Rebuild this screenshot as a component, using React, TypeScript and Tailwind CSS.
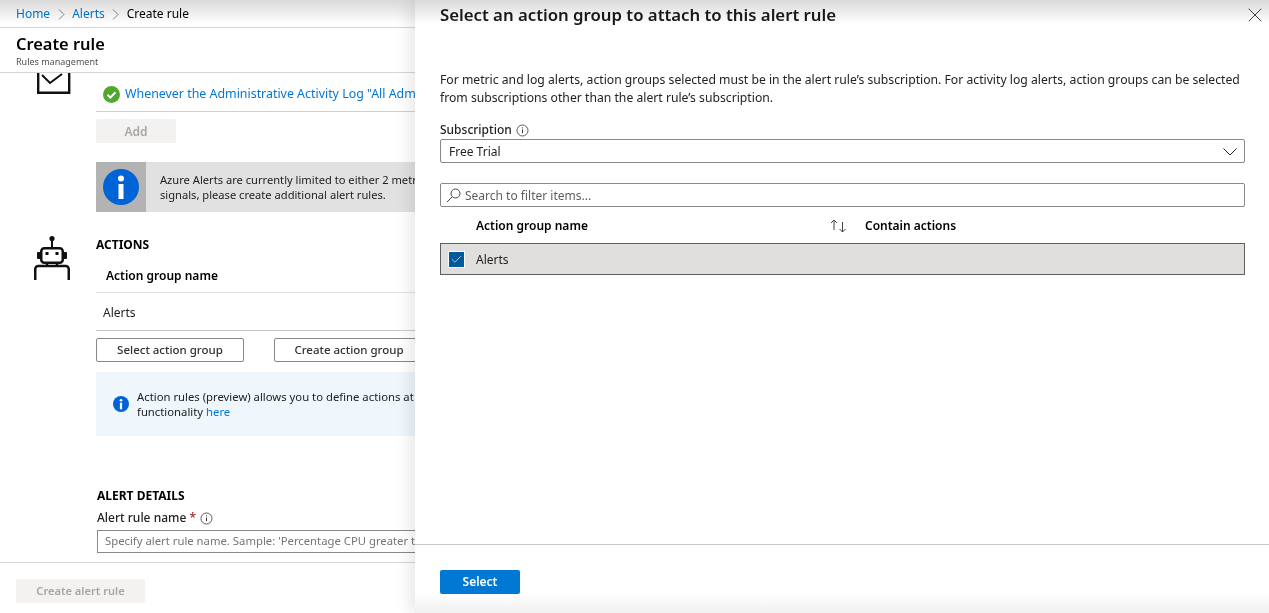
import React from 'react';
import { X, Check } from 'lucide-react';

const FONT = "font-['Noto_Sans',sans-serif]";

const InfoHint = () => (
  <svg width="13" height="13" viewBox="0 0 13 13" className="shrink-0" fill="none" stroke="#323130">
    <circle cx="6.5" cy="6.5" r="5.5" strokeWidth="0.8" />
    <path d="M6.5 5.6v3.6" strokeWidth="1" />
    <path d="M6.5 3.4v1" strokeWidth="1" />
  </svg>
);

const BlueInfo = ({ size }: { size: number }) => (
  <svg width={size} height={size} viewBox="0 0 36 36" className="shrink-0">
    <circle cx="18" cy="18" r="18" fill="#0063d6" />
    <circle cx="18" cy="9.5" r="3" fill="#fff" />
    <rect x="15.5" y="15" width="5" height="15" fill="#fff" />
  </svg>
);

const SuccessCheck = () => (
  <svg width="17" height="17" viewBox="0 0 17 17" className="shrink-0">
    <circle cx="8.5" cy="8.5" r="8.5" fill="#52a82e" />
    <path d="M4.5 8.8l2.8 2.8 5.2-5.4" fill="none" stroke="#fff" strokeWidth="2" />
  </svg>
);

const RobotIcon = () => (
  <svg width="38" height="44" viewBox="0 0 38 44" className="shrink-0" fill="none" stroke="#111" strokeWidth="2.5">
    <circle cx="19" cy="2.6" r="2.6" fill="#111" stroke="none" />
    <path d="M19 4v8" strokeWidth="2" />
    <rect x="8.25" y="12.25" width="21.5" height="14.5" rx="3" />
    <rect x="4" y="16" width="3.5" height="7" rx="1" fill="#111" stroke="none" />
    <rect x="30.5" y="16" width="3.5" height="7" rx="1" fill="#111" stroke="none" />
    <rect x="12.5" y="16" width="3" height="3" fill="#111" stroke="none" />
    <rect x="22.5" y="16" width="3" height="3" fill="#111" stroke="none" />
    <path d="M14 27v3M24 27v3" />
    <path d="M2.25 44V33a3 3 0 0 1 3-3h27.5a3 3 0 0 1 3 3v11" />
  </svg>
);

const Crumb = () => (
  <svg width="7" height="11" viewBox="0 0 7 11" className="mx-[7.5px]" fill="none" stroke="#8a8886">
    <path d="M1 .5l5 5-5 5" />
  </svg>
);

const LeftBlade = () => (
  <div className="w-[415px] shrink-0 h-full flex flex-col overflow-hidden">
    {/* Breadcrumb */}
    <div className="h-[28px] shrink-0 border-b border-[#d6d6d6] flex items-center pl-[16px] text-[12px] text-[#323130] pt-[1px]">
      <span className="text-[#0078d4]">Home</span>
      <Crumb />
      <span className="text-[#0078d4]">Alerts</span>
      <Crumb />
      <span className="text-black">Create rule</span>
    </div>

    {/* Title */}
    <div className="h-[45px] shrink-0 border-b border-[#d6d6d6] pl-[16px] pt-[5px]">
      <div className="text-[16.4px] leading-[22px] font-semibold text-black">Create rule</div>
      <div className="mt-[1px] text-[9px] leading-[12px] text-[#505050]">Rules management</div>
    </div>

    {/* Scrolling body */}
    <div className="flex-1 min-h-0 overflow-hidden flex flex-col">
      <div className="flex">
        <div className="w-[96px] shrink-0 pl-[37px]">
          <svg width="34" height="21" viewBox="0 0 34 21" fill="none" stroke="#111" strokeWidth="2.4">
            <path d="M1.2 0v19.8h31V0" />
            <path d="M5 2l8 8L25 1" strokeWidth="2" />
          </svg>
        </div>
        <div className="flex-1 min-w-0">
          <div className="h-[39px] border-b border-[#d0d0d0] flex items-center pl-[7px] pt-[4px] gap-[5px] whitespace-nowrap text-[12.4px] text-[#0078d4]">
            <SuccessCheck />
            <span>Whenever the Administrative Activity Log "All Administrative operations"</span>
          </div>
          <div className="mt-[7px] w-[80px] h-[24px] pt-[1px] bg-[#f3f2f1] rounded-[2px] flex items-center justify-center text-[12px] font-semibold text-[#a8a6a4]">Add</div>
          <div className="mt-[19px] h-[50px] bg-[#e1e1e1] flex items-center whitespace-nowrap">
            <div className="w-[50px] shrink-0 h-full bg-[#b3b3b3] flex items-center justify-center"><BlueInfo size={36} /></div>
            <div className="pl-[14px] text-[11.15px] leading-[15px] text-[#222]">
              <div>Azure Alerts are currently limited to either 2 metrics or 1 log</div>
              <div>signals, please create additional alert rules.</div>
            </div>
          </div>
        </div>
      </div>

      <div className="flex mt-[25px]">
        <div className="w-[96px] shrink-0 pl-[33px] -mt-[1px]"><RobotIcon /></div>
        <div className="flex-1 min-w-0">
          <div className="text-[12px] leading-[16px] font-bold text-black">ACTIONS</div>
          <div className="h-[40px] border-b border-[#e3e3e3] flex items-center pl-[10px] pt-[6px] text-[12px] font-semibold text-black">Action group name</div>
          <div className="h-[38px] border-b border-[#c8c8c8] flex items-center pl-[7px] pt-[2px] text-[12px] text-[#222]">Alerts</div>
          <div className="flex mt-[7px] gap-[30px]">
            <div className="w-[148px] h-[24px] shrink-0 border border-[#8a8886] rounded-[2px] flex items-center justify-center text-[11.5px] font-medium text-[#323130]">Select action group</div>
            <div className="w-[150px] h-[24px] shrink-0 border border-[#8a8886] rounded-[2px] flex items-center justify-center text-[11.5px] font-medium text-[#323130]">Create action group</div>
          </div>
          <div className="mt-[10px] h-[64px] bg-[#eff6fc] flex items-center pl-[17px] gap-[8px] whitespace-nowrap">
            <BlueInfo size={16} />
            <div className="text-[11.3px] leading-[15px] text-[#222]">
              <div>Action rules (preview) allows you to define actions at scale and more</div>
              <div>functionality <span className="text-[#0078d4]">here</span></div>
            </div>
          </div>
        </div>
      </div>

      <div className="pl-[97px] mt-[52px] whitespace-nowrap">
        <div className="text-[12px] leading-[16px] font-bold text-black">ALERT DETAILS</div>
        <div className="mt-[6px] flex items-center gap-[4px] text-[12px] leading-[16px] font-medium text-[#222]">
          <span>Alert rule name <span className="text-[#a4262c]">*</span></span>
          <InfoHint />
        </div>
        <div className="mt-[4px] w-[340px] h-[23px] border border-[#8a8886] flex items-center pl-[7px] text-[11.3px] text-[#757575]">Specify alert rule name. Sample: 'Percentage CPU greater than 70'</div>
      </div>
    </div>

    {/* Footer */}
    <div className="h-[51px] shrink-0 border-t border-[#d6d6d6] pl-[16px] pt-[16px]">
      <div className="w-[129px] h-[24px] bg-[#f3f2f1] rounded-[2px] flex items-center justify-center text-[11.1px] font-semibold text-[#a8a6a4]">Create alert rule</div>
    </div>
  </div>
);

const RightPanel = () => (
  <div className="relative z-10 flex-1 min-w-0 h-full bg-white shadow-[-6px_0_14px_rgba(0,0,0,0.09)] flex flex-col">
    <div className="flex-1 min-h-0 pl-[25px] pr-[24px]">
      <div className="flex items-center justify-between h-[30px]">
        <div className="text-[16.75px] font-semibold text-[#1b1a19] whitespace-nowrap">Select an action group to attach to this alert rule</div>
        <X size={24} strokeWidth={0.8} color="#111" className="-mr-[22px] shrink-0" />
      </div>
      <div className="mt-[41px] text-[12.2px] leading-[18px] text-[#222] whitespace-nowrap">
        For metric and log alerts, action groups selected must be in the alert rule’s subscription. For activity log alerts, action groups can be selected
        <br />
        from subscriptions other than the alert rule’s subscription.
      </div>
      <div className="mt-[15px] flex items-center gap-[4px] text-[12px] leading-[16px] font-medium text-[#222]">
        <span>Subscription</span>
        <InfoHint />
      </div>
      <div className="mt-[1px] h-[24px] pt-[1px] border border-[#8a8886] rounded-[2px] flex items-center justify-between pl-[8px] pr-[7px] text-[12px] text-[#222]">
        <span>Free Trial</span>
        <svg width="14" height="8" viewBox="0 0 14 8" fill="none" stroke="#222" strokeWidth="1"><path d="M.5.5L7 7l6.5-6.5" /></svg>
      </div>
      <div className="mt-[20px] h-[24px] pt-[1px] border border-[#8a8886] rounded-[2px] flex items-center pl-[5px] gap-[4px] text-[12px] text-[#605e5c]">
        <svg width="15" height="15" viewBox="0 0 15 15" fill="none" stroke="#444" strokeWidth="1">
          <circle cx="9.5" cy="5.5" r="4.5" />
          <path d="M6.2 8.8L1 14" />
        </svg>
        <span>Search to filter items...</span>
      </div>
      <div className="h-[36px] pt-[2px] flex items-center text-[12px] font-semibold text-black">
        <span className="w-[390px] pl-[36px]">Action group name</span>
        <svg width="35" height="14" viewBox="0 0 35 14" fill="none" stroke="#444" strokeWidth="1" className="shrink-0">
          <path d="M4 11V1M1 4l3-3 3 3" />
          <path d="M12.5 3v10M9.5 10l3 3 3-3" />
        </svg>
        <span>Contain actions</span>
      </div>
      <div className="h-[32px] pt-[1px] bg-[#e0dfdd] border border-[#605e5c] flex items-center pl-[7px] gap-[11px] text-[12px] text-[#222]">
        <span className="w-[17px] h-[17px] -mt-[1px] bg-[#005a9e] border border-white flex items-center justify-center">
          <Check size={13} strokeWidth={1.2} color="#fff" />
        </span>
        <span>Alerts</span>
      </div>
    </div>
    <div className="h-[69px] shrink-0 border-t border-[#c8c8c8] pl-[25px] pt-[25px]">
      <div className="w-[80px] h-[24px] bg-[#0078d4] rounded-[2px] flex items-center justify-center text-[12px] font-semibold text-white">Select</div>
    </div>
  </div>
);

export default function App() {
  return (
    <div className={`relative h-screen w-full flex overflow-hidden bg-white ${FONT}`}>
      <LeftBlade />
      <RightPanel />
      {/* top shadow from the portal header, bottom fade */}
      <div className="absolute z-20 top-0 inset-x-0 h-[24px] bg-gradient-to-b from-[#d9d9d9] to-white mix-blend-multiply pointer-events-none" />
      <div className="absolute z-20 bottom-0 left-[415px] right-0 h-[20px] bg-gradient-to-t from-[#f0f0f0] to-white mix-blend-multiply pointer-events-none" />
    </div>
  );
}
